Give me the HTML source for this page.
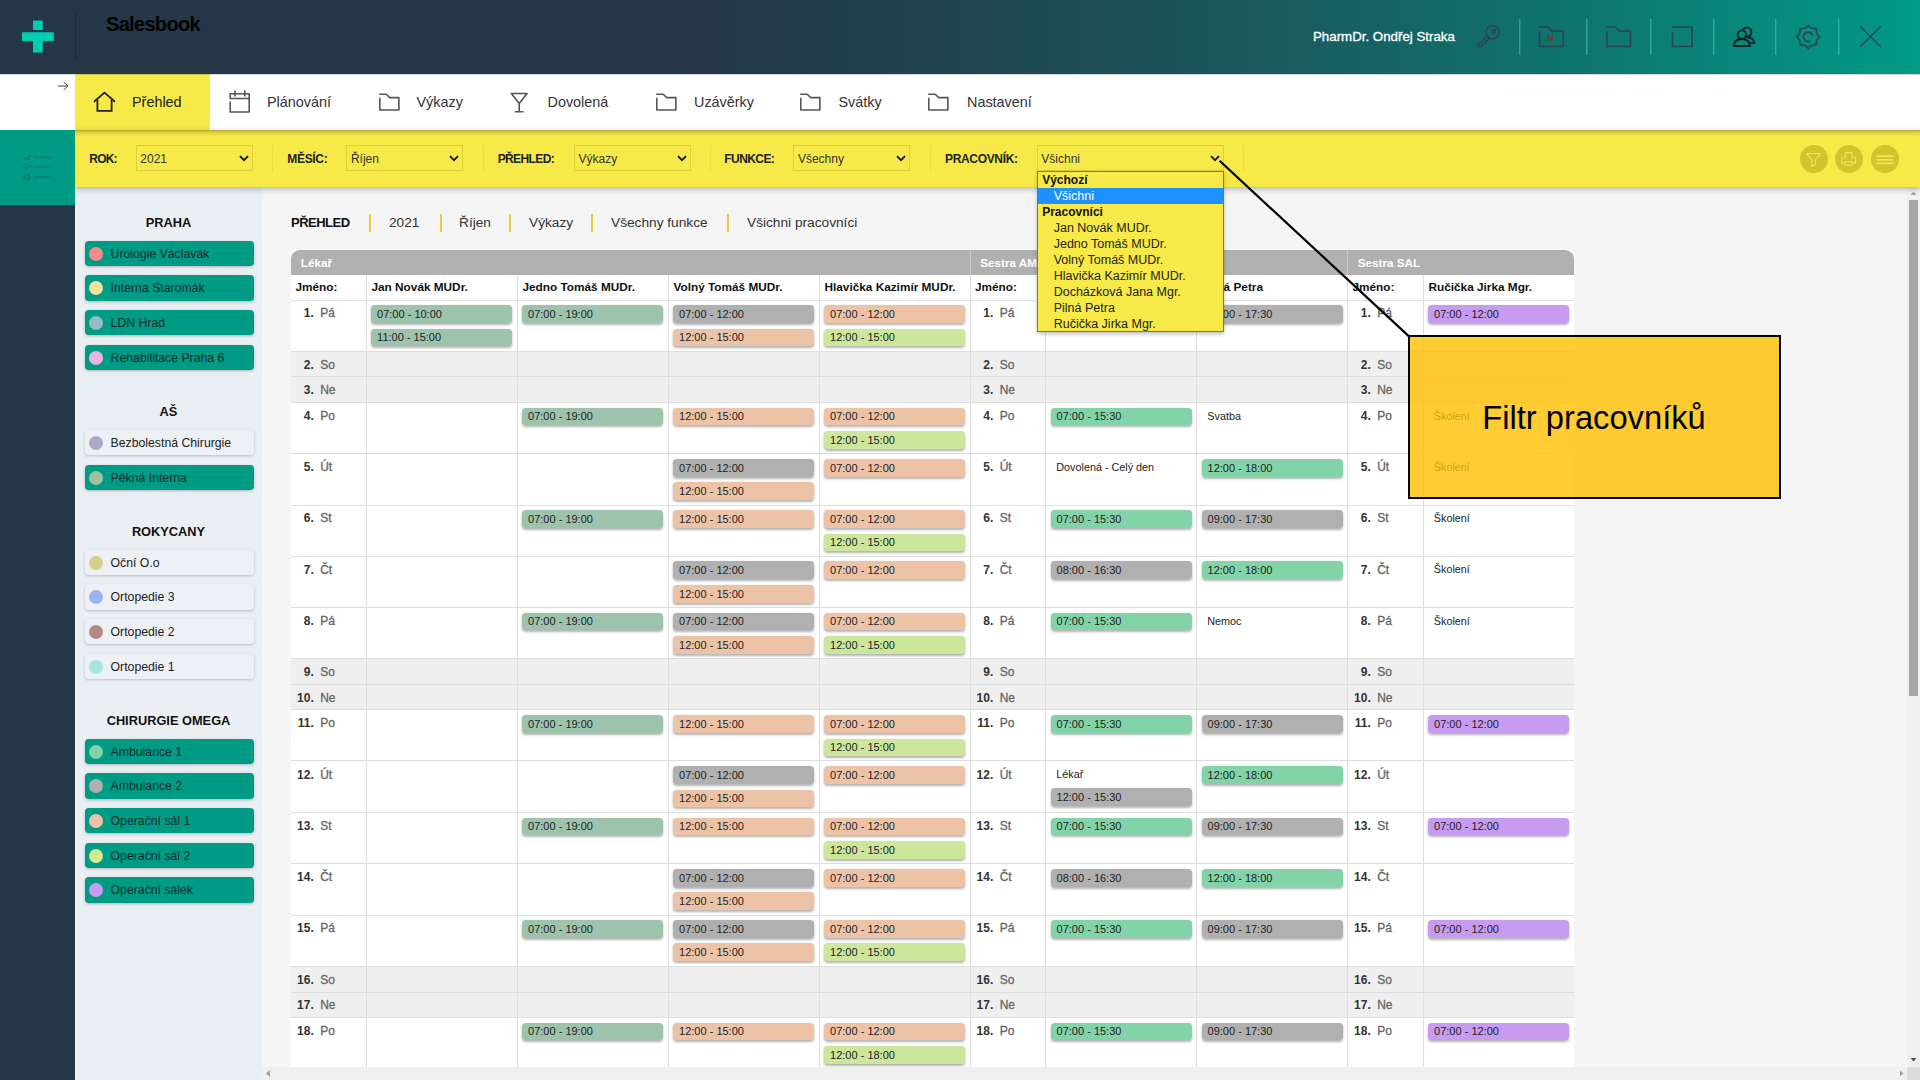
<!DOCTYPE html>
<html lang="cs">
<head>
<meta charset="utf-8">
<title>Salesbook</title>
<style>
*{box-sizing:border-box;margin:0;padding:0}
html,body{width:1920px;height:1080px;overflow:hidden;background:#f5f5f5;font-family:"Liberation Sans",sans-serif;color:#222}
.abs{position:absolute}
#top{position:absolute;left:0;top:0;width:1920px;height:74px;background:linear-gradient(90deg,#253746 0%,#253746 35%,#233c49 41.7%,#1f4751 52.1%,#195c60 67.7%,#0e7770 83.3%,#029885 99%,#009d88 100%)}
#top .vsep{position:absolute;top:13px;height:47px;width:1px;left:75px;background:#1c2b38}
#brand{position:absolute;left:106px;top:13px;font-size:20px;font-weight:bold;color:#000;line-height:22px;letter-spacing:-0.68px}
#user{position:absolute;left:1313px;top:28px;font-size:13.3px;color:#fff;white-space:nowrap;line-height:17px;-webkit-text-stroke:0.3px #fff}
.tsep{position:absolute;top:19px;height:36px;width:1px;background:rgba(80,210,190,.5);box-shadow:1px 0 0 rgba(80,210,190,.22)}
.tico{position:absolute;top:24px;width:26px;height:26px}
#nav{position:absolute;left:0;top:74px;width:1920px;height:56px;background:#fff}
#nav:after{content:"";position:absolute;left:0;top:0;width:100%;height:1px;background:rgba(37,55,70,.2)}
#nav .tab{position:absolute;top:0;height:56px;font-size:14.4px;color:#333;line-height:56px;white-space:nowrap}
#nav .active{left:75px;width:135px;background:#f7e948}
#filter{position:absolute;left:75px;top:130px;width:1845px;height:57px;background:#f7e948;box-shadow:0 2px 6px rgba(0,0,0,.28)}
#filter:before{content:"";position:absolute;left:0;top:0;width:100%;height:7px;background:linear-gradient(rgba(0,0,0,.27),rgba(0,0,0,.08) 45%,rgba(0,0,0,0))}
#filter .lbl{position:absolute;top:22px;font-size:12px;font-weight:bold;color:#222;white-space:nowrap;letter-spacing:-0.33px;line-height:14px}
#filter .sel{position:absolute;top:15px;height:26px;border:1px solid #dfd03e;border-radius:0;font-size:12px;color:#333;line-height:26.6px;padding-left:3.6px}
#filter .sel svg{position:absolute;right:3.2px;top:8.6px}
#filter .fsep{position:absolute;top:15px;width:1px;height:27px;background:#ecdd42}
.circ{position:absolute;top:14.7px;width:28.4px;height:28.4px;border-radius:50%;background:#d1c42f}
#sideteal{z-index:5;position:absolute;left:0;top:130px;width:75px;height:75px;background:#009b85}
#sidedark{z-index:5;position:absolute;left:0;top:205px;width:75px;height:875px;background:#253746}
#panel{position:absolute;left:75px;top:187px;width:187.3px;height:893px;background:#eaeff3}
#panel h3{position:absolute;left:0;width:187px;text-align:center;font-size:12.8px;margin-top:1px;font-weight:bold;color:#111}
.pbtn{position:absolute;left:9.6px;width:169px;height:25.4px;border-radius:4px;font-size:12.25px;line-height:26.4px;padding-left:26px;color:#0d2b2a;white-space:nowrap;box-shadow:0 1px 3px rgba(0,0,0,.25)}
.pbtn.on{background:#009b85}
.pbtn.off{background:#edf0f4;color:#222;box-shadow:0 1px 3px rgba(0,0,0,.2)}
.pbtn i{position:absolute;left:4.5px;top:6px;width:14px;height:14px;border-radius:50%}
#crumbs{position:absolute;left:291px;top:214.7px;font-size:13.7px;color:#333;white-space:nowrap}
#crumbs span{position:absolute;top:0}
#crumbs b{color:#111;font-size:13px;letter-spacing:-0.5px}
#crumbs .bar{position:absolute;top:-1px;margin-left:.7px;width:2px;height:18px;background:#e3cf3a}
table{position:absolute;border-collapse:separate;border-spacing:0;table-layout:fixed}

#grid{position:absolute;left:0;top:0}
.grp{position:absolute;top:250px;font-size:12px;height:830px}
.gh{height:25px;background:#b0b0b0;color:#fff;font-weight:bold;font-size:11.7px;line-height:26px;padding-left:9.5px;border-right:1px solid #c8c8c8}
.grp.first .gh{border-top-left-radius:9px}
.grp.last .gh{border-top-right-radius:9px;border-right:none}
.row{display:flex;background:#fff;border-bottom:1px solid #dedede}
.row.nm{height:26px;font-weight:bold;color:#111;line-height:25px;font-size:11.8px}
.row.wd,.row.we{position:absolute;left:0;width:100%}
.row.we{background:#efefef}
.c0{width:75.5px;flex:none;border-right:1px solid #dedede;padding-left:4.2px;white-space:nowrap}
.cc{position:relative;width:151px;flex:none;border-right:1px solid #dedede;white-space:nowrap}
.grp.last .cc:last-child{border-right:none;width:150.4px}
.row.nm .cc{padding:0 0 0 4.7px}
.row.wd .c0,.row.we .c0{padding:0;line-height:14px;color:#666}
.c0 b{display:inline-block;width:22.5px;text-align:right;color:#333;font-weight:bold}
.c0 span{margin-left:6.4px;-webkit-text-stroke:0.3px #666}
.chip{position:absolute;left:4.7px;width:141px;border-radius:4px;font-size:11px;padding-left:5.6px;color:#222;box-shadow:0 1.5px 2.5px rgba(0,0,0,.3)}
.txt{position:absolute;left:4.7px;height:18px;font-size:10.8px;line-height:17.6px;padding-left:5.3px;color:#222}
.sage{background:#9dc3ac}.gray{background:#b0b0b0}.salmon{background:#edc3a8}.lime{background:#cce69c}.green{background:#82d4a8}.purple{background:#c79bf0}
#vsb{position:absolute;left:1907px;top:187px;width:13px;height:880px;background:#f0f0f0}
#vsb .thumb{position:absolute;left:2px;top:13px;width:9px;height:496px;background:#a8a8a8}
#hsb{position:absolute;left:262px;top:1067px;width:1645px;height:13px;background:#f0f0f0}
#corner{position:absolute;left:1907px;top:1067px;width:13px;height:13px;background:#dcdcdc}
#dd{position:absolute;left:1036.7px;top:170.6px;width:187px;height:161px;background:#f7e948;border:1px solid #767676;font-size:12.5px;color:#222;box-shadow:0 2px 4px rgba(0,0,0,.25);line-height:16px}
#dd .og{font-weight:bold;padding-left:4.5px;height:16px;color:#111;font-size:12px}
#dd .op{padding-left:16px;height:16px}
#dd .sel2{background:#1e90ff;color:#fff}
#callout{position:absolute;left:1408px;top:335px;width:373px;height:164px;border:2px solid #000;background:rgba(255,192,0,.8);}
#callout span{position:absolute;left:72.3px;top:63px;font-size:32.7px;color:#000;white-space:nowrap;line-height:36px}
</style>
</head>
<body>
<div id="top">
<svg class="abs" style="left:21px;top:20px" width="34" height="34" viewBox="0 0 34 34"><path d="M12 .6h9.75V10H12zM.9 12.25h31.85v9H21.75V32.5H12V21.25H.9z" fill="#00cdb0"/></svg>
<div class="vsep"></div>
<div id="brand">Salesbook</div>
<div id="user">PharmDr. Ondřej Straka</div>

<svg class="abs" style="left:1475px;top:23px" width="27" height="27" viewBox="0 0 27 27" fill="none" stroke="#2b4655" stroke-width="1.7" stroke-linecap="round" stroke-linejoin="round"><circle cx="17.6" cy="9.3" r="6.6"/><circle cx="18.8" cy="8.2" r="1.6"/><path d="M12.3 13.2L3 21.3v2.4h2.9l1.6-1.5v-1.8h1.9l1.5-1.4v-1.7h1.8l2-1.9"/></svg>
<div class="tsep" style="left:1519px"></div>
<svg class="abs" style="left:1537px;top:24px" width="29" height="26" viewBox="0 0 29 26" fill="none" stroke="#2b4655" stroke-width="1.7" stroke-linejoin="round" stroke-linecap="round"><path d="M2.5 3h8.5l4 4.2h11.2v15.3H2.5V8"/><text x="10.6" y="17.4" font-family="Liberation Sans, sans-serif" font-size="8.5" font-weight="bold" fill="#6e3a30" stroke="none">N</text></svg>
<div class="tsep" style="left:1586px"></div>
<svg class="abs" style="left:1604px;top:24px" width="29" height="26" viewBox="0 0 29 26" fill="none" stroke="#2b4655" stroke-width="1.7" stroke-linejoin="round" stroke-linecap="round"><path d="M2.8 3h8.5l4 4.2h11.2v15.3H2.8V8"/></svg>
<div class="tsep" style="left:1649.5px"></div>
<svg class="abs" style="left:1670px;top:24px" width="25" height="26" viewBox="0 0 25 26" fill="none" stroke="#2b4655" stroke-width="1.7" stroke-linejoin="round" stroke-linecap="round"><path d="M2.5 3h19.5M2.5 8.5v14h19.5V3.2"/></svg>
<div class="tsep" style="left:1712.5px"></div>
<svg class="abs" style="left:1731px;top:24px" width="27" height="26" viewBox="0 0 27 26" fill="none" stroke="#0b1f20" stroke-width="1.8" stroke-linejoin="round" stroke-linecap="round"><circle cx="10.9" cy="10.6" r="4.3"/><path d="M12.6 5.2a4.5 4.5 0 1 1 3.6 7.4"/><path d="M3 22.2c0-4.6 3.1-7.2 7.9-7.2s7.9 2.6 7.9 7.2z"/><path d="M17.5 13.6c3.6 .5 5.6 2.6 5.9 5.6h-3.6"/></svg>
<div class="tsep" style="left:1775px"></div>
<svg class="abs" style="left:1795px;top:23px" width="27" height="28" viewBox="0 0 27 28" fill="none" stroke="#2b4655" stroke-width="1.7" stroke-linejoin="round" stroke-linecap="round"><path d="M13.2 2.2L13.5 2.6L13.8 2.9L14.0 3.2L14.3 3.4L14.5 3.7L14.8 3.9L15.0 4.1L15.2 4.3L15.4 4.4L15.7 4.6L15.9 4.7L16.1 4.9L16.3 5.0L16.5 5.1L16.8 5.2L17.0 5.3L17.2 5.4L17.5 5.4L17.7 5.5L18.0 5.5L18.2 5.6L18.5 5.6L18.8 5.6L19.1 5.7L19.4 5.7L19.8 5.7L20.1 5.7L20.5 5.7L20.9 5.7L21.4 5.6L21.3 6.1L21.3 6.5L21.3 6.9L21.3 7.2L21.3 7.6L21.3 7.9L21.4 8.2L21.4 8.5L21.4 8.8L21.5 9.0L21.5 9.3L21.6 9.5L21.6 9.8L21.7 10.0L21.8 10.2L21.9 10.5L22.0 10.7L22.1 10.9L22.3 11.1L22.4 11.3L22.6 11.6L22.7 11.8L22.9 12.0L23.1 12.2L23.3 12.5L23.6 12.7L23.8 13.0L24.1 13.2L24.4 13.5L24.8 13.8L24.4 14.1L24.1 14.4L23.8 14.6L23.6 14.9L23.3 15.1L23.1 15.4L22.9 15.6L22.7 15.8L22.6 16.0L22.4 16.3L22.3 16.5L22.1 16.7L22.0 16.9L21.9 17.1L21.8 17.4L21.7 17.6L21.6 17.8L21.6 18.1L21.5 18.3L21.5 18.6L21.4 18.8L21.4 19.1L21.4 19.4L21.3 19.7L21.3 20.0L21.3 20.4L21.3 20.7L21.3 21.1L21.3 21.5L21.4 22.0L20.9 21.9L20.5 21.9L20.1 21.9L19.8 21.9L19.4 21.9L19.1 21.9L18.8 22.0L18.5 22.0L18.2 22.0L18.0 22.1L17.7 22.1L17.5 22.2L17.2 22.2L17.0 22.3L16.8 22.4L16.5 22.5L16.3 22.6L16.1 22.7L15.9 22.9L15.7 23.0L15.4 23.2L15.2 23.3L15.0 23.5L14.8 23.7L14.5 23.9L14.3 24.2L14.0 24.4L13.8 24.7L13.5 25.0L13.2 25.4L12.9 25.0L12.6 24.7L12.4 24.4L12.1 24.2L11.9 23.9L11.6 23.7L11.4 23.5L11.2 23.3L11.0 23.2L10.7 23.0L10.5 22.9L10.3 22.7L10.1 22.6L9.9 22.5L9.6 22.4L9.4 22.3L9.2 22.2L8.9 22.2L8.7 22.1L8.4 22.1L8.2 22.0L7.9 22.0L7.6 22.0L7.3 21.9L7.0 21.9L6.6 21.9L6.3 21.9L5.9 21.9L5.5 21.9L5.0 22.0L5.1 21.5L5.1 21.1L5.1 20.7L5.1 20.4L5.1 20.0L5.1 19.7L5.0 19.4L5.0 19.1L5.0 18.8L4.9 18.6L4.9 18.3L4.8 18.1L4.8 17.8L4.7 17.6L4.6 17.4L4.5 17.1L4.4 16.9L4.3 16.7L4.1 16.5L4.0 16.3L3.8 16.0L3.7 15.8L3.5 15.6L3.3 15.4L3.1 15.1L2.8 14.9L2.6 14.6L2.3 14.4L2.0 14.1L1.6 13.8L2.0 13.5L2.3 13.2L2.6 13.0L2.8 12.7L3.1 12.5L3.3 12.2L3.5 12.0L3.7 11.8L3.8 11.6L4.0 11.3L4.1 11.1L4.3 10.9L4.4 10.7L4.5 10.5L4.6 10.2L4.7 10.0L4.8 9.8L4.8 9.5L4.9 9.3L4.9 9.0L5.0 8.8L5.0 8.5L5.0 8.2L5.1 7.9L5.1 7.6L5.1 7.2L5.1 6.9L5.1 6.5L5.1 6.1L5.0 5.6L5.5 5.7L5.9 5.7L6.3 5.7L6.6 5.7L7.0 5.7L7.3 5.7L7.6 5.6L7.9 5.6L8.2 5.6L8.4 5.5L8.7 5.5L8.9 5.4L9.2 5.4L9.4 5.3L9.6 5.2L9.9 5.1L10.1 5.0L10.3 4.9L10.5 4.7L10.7 4.6L11.0 4.4L11.2 4.3L11.4 4.1L11.6 3.9L11.9 3.7L12.1 3.4L12.4 3.2L12.6 2.9L12.9 2.6L13.2 2.2Z"/><path d="M17.6 12.2a4.7 4.7 0 1 0-2.6 5.9"/></svg>
<div class="tsep" style="left:1838px"></div>
<svg class="abs" style="left:1858px;top:24px" width="25" height="25" viewBox="0 0 25 25" fill="none" stroke="#2b4655" stroke-width="1.5" stroke-linecap="round"><path d="M2.6 2.8l19.6 19.4M22.2 2.8L2.6 22.2"/></svg>

</div>
<div id="nav">

<svg class="abs" style="left:57px;top:6px" width="12" height="12" viewBox="0 0 12 12" fill="none" stroke="#444" stroke-width="1" stroke-linecap="round" stroke-linejoin="round"><path d="M1.5 6h9M7 2.2L10.7 6 7 9.8"/></svg>

<div class="tab active"></div>

<svg class="abs" style="left:92px;top:16px" width="25" height="24" viewBox="0 0 25 24" fill="none" stroke="#222" stroke-width="1.8" stroke-linejoin="miter" stroke-linecap="round"><path d="M2.6 11.3L12.5 2.6l9.9 8.7"/><path d="M5.4 10.6v10.2h14.2V10.6"/></svg>
<div class="tab" style="left:132px;color:#222">Přehled</div>
<svg class="abs" style="left:227px;top:15px" width="25" height="26" viewBox="0 0 25 26" fill="none" stroke="#555" stroke-width="1.6" stroke-linejoin="round" stroke-linecap="round"><path d="M3.2 9.5h19M3.2 13v10h19V4.8h-19v4.6"/><path d="M8 2v5M17.8 2v5"/></svg>
<div class="tab" style="left:267px">Plánování</div>
<svg class="abs" style="left:376.7px;top:18px" width="26" height="22" viewBox="0 0 26 22" fill="none" stroke="#555" stroke-width="1.6" stroke-linejoin="round" stroke-linecap="round"><path d="M2.8 2.3h6.5l3.3 3.3h9.3v12.4H2.8V6.4"/></svg>
<div class="tab" style="left:416.5px">Výkazy</div>
<svg class="abs" style="left:508px;top:17px" width="22" height="24" viewBox="0 0 22 24" fill="none" stroke="#555" stroke-width="1.6" stroke-linejoin="round" stroke-linecap="round"><path d="M3.2 2.5h16M3.6 2.8l7.6 9.6 7.6-9.6M11.2 12.4v8.2M7.4 20.8h7.6"/></svg>
<div class="tab" style="left:547.5px">Dovolená</div>
<svg class="abs" style="left:653.9px;top:18px" width="26" height="22" viewBox="0 0 26 22" fill="none" stroke="#555" stroke-width="1.6" stroke-linejoin="round" stroke-linecap="round"><path d="M2.8 2.3h6.5l3.3 3.3h9.3v12.4H2.8V6.4"/></svg>
<div class="tab" style="left:694px">Uzávěrky</div>
<svg class="abs" style="left:798px;top:18px" width="26" height="22" viewBox="0 0 26 22" fill="none" stroke="#555" stroke-width="1.6" stroke-linejoin="round" stroke-linecap="round"><path d="M2.8 2.3h6.5l3.3 3.3h9.3v12.4H2.8V6.4"/></svg>
<div class="tab" style="left:838.5px">Svátky</div>
<svg class="abs" style="left:926.3px;top:18px" width="26" height="22" viewBox="0 0 26 22" fill="none" stroke="#555" stroke-width="1.6" stroke-linejoin="round" stroke-linecap="round"><path d="M2.8 2.3h6.5l3.3 3.3h9.3v12.4H2.8V6.4"/></svg>
<div class="tab" style="left:967px">Nastavení</div>

</div>
<div id="sideteal"><svg class="abs" style="left:20px;top:20px" width="36" height="34" viewBox="0 0 36 34" fill="none" stroke="#007d6e" stroke-width="1.7" stroke-linecap="round" stroke-linejoin="round"><path d="M4 7l2.3 2.3L10.3 5.3M4 16.8l2.3 2.3 4-4"/><circle cx="6.7" cy="27" r="2.4"/><path d="M15.3 7.2h16M15.3 17h16M15.3 27h16"/></svg></div>
<div id="sidedark"></div>
<div id="panel">
<h3 style="top:27px">PRAHA</h3>
<div class="pbtn on" style="top:53.5px"><i style="background:#f58a8a"></i>Urologie Václavák</div>
<div class="pbtn on" style="top:88.2px"><i style="background:#f0e29a"></i>Interna Staromák</div>
<div class="pbtn on" style="top:122.9px"><i style="background:#94bcc4"></i>LDN Hrad</div>
<div class="pbtn on" style="top:157.6px"><i style="background:#e8b4dc"></i>Rehabilitace Praha 6</div>
<h3 style="top:216px">AŠ</h3>
<div class="pbtn off" style="top:243.0px"><i style="background:#b0a8c8"></i>Bezbolestná Chirurgie</div>
<div class="pbtn on" style="top:277.7px"><i style="background:#9dc3a4"></i>Pěkná Interna</div>
<h3 style="top:336px">ROKYCANY</h3>
<div class="pbtn off" style="top:362.5px"><i style="background:#d6cf8c"></i>Oční O.o</div>
<div class="pbtn off" style="top:397.2px"><i style="background:#9db4f0"></i>Ortopedie 3</div>
<div class="pbtn off" style="top:431.9px"><i style="background:#b58888"></i>Ortopedie 2</div>
<div class="pbtn off" style="top:466.6px"><i style="background:#a4e8dc"></i>Ortopedie 1</div>
<h3 style="top:525px">CHIRURGIE OMEGA</h3>
<div class="pbtn on" style="top:551.5px"><i style="background:#82d4a8"></i>Ambulance 1</div>
<div class="pbtn on" style="top:586.2px"><i style="background:#b0b0b0"></i>Ambulance 2</div>
<div class="pbtn on" style="top:620.9px"><i style="background:#edc3a8"></i>Operační sál 1</div>
<div class="pbtn on" style="top:655.6px"><i style="background:#d4e890"></i>Operační sál 2</div>
<div class="pbtn on" style="top:690.3px"><i style="background:#c79bf0"></i>Operační sálek</div>
</div>
<div id="crumbs">
<span style="left:0"><b>PŘEHLED</b></span><div class="bar" style="left:77px"></div>
<span style="left:98px">2021</span><div class="bar" style="left:148px"></div>
<span style="left:168px">Říjen</span><div class="bar" style="left:217px"></div>
<span style="left:238px">Výkazy</span><div class="bar" style="left:299px"></div>
<span style="left:320px">Všechny funkce</span><div class="bar" style="left:435px"></div>
<span style="left:456px">Všichni pracovníci</span>
</div>
<div id="grid">
<div class="grp first" style="left:291.3px;width:679.5px">
<div class="gh">Lékař</div>
<div class="row nm"><div class="c0">Jméno:</div><div class="cc">Jan Novák MUDr.</div><div class="cc">Jedno Tomáš MUDr.</div><div class="cc">Volný Tomáš MUDr.</div><div class="cc">Hlavička Kazimír MUDr.</div></div>
<div class="row wd" style="top:51px;height:51px"><div class="c0" style="padding-top:5px"><b>1.</b><span>Pá</span></div><div class="cc"><div class="chip sage" style="top:4px;height:18px;line-height:18px">07:00 - 10:00</div><div class="chip sage" style="top:28px;height:17px;line-height:17px">11:00 - 15:00</div></div><div class="cc"><div class="chip sage" style="top:4px;height:18px;line-height:18px">07:00 - 19:00</div></div><div class="cc"><div class="chip gray" style="top:4px;height:18px;line-height:18px">07:00 - 12:00</div><div class="chip salmon" style="top:28px;height:17px;line-height:17px">12:00 - 15:00</div></div><div class="cc"><div class="chip salmon" style="top:4px;height:18px;line-height:18px">07:00 - 12:00</div><div class="chip lime" style="top:28px;height:17px;line-height:17px">12:00 - 15:00</div></div></div>
<div class="row we" style="top:102px;height:25px"><div class="c0" style="padding-top:6px"><b>2.</b><span>So</span></div><div class="cc"></div><div class="cc"></div><div class="cc"></div><div class="cc"></div></div>
<div class="row we" style="top:127px;height:26px"><div class="c0" style="padding-top:6px"><b>3.</b><span>Ne</span></div><div class="cc"></div><div class="cc"></div><div class="cc"></div><div class="cc"></div></div>
<div class="row wd" style="top:153px;height:51px"><div class="c0" style="padding-top:6px"><b>4.</b><span>Po</span></div><div class="cc"></div><div class="cc"><div class="chip sage" style="top:5px;height:17px;line-height:17px">07:00 - 19:00</div></div><div class="cc"><div class="chip salmon" style="top:5px;height:17px;line-height:17px">12:00 - 15:00</div></div><div class="cc"><div class="chip salmon" style="top:5px;height:17px;line-height:17px">07:00 - 12:00</div><div class="chip lime" style="top:28px;height:18px;line-height:18px">12:00 - 15:00</div></div></div>
<div class="row wd" style="top:204px;height:52px"><div class="c0" style="padding-top:6px"><b>5.</b><span>Út</span></div><div class="cc"></div><div class="cc"></div><div class="cc"><div class="chip gray" style="top:5px;height:18px;line-height:18px">07:00 - 12:00</div><div class="chip salmon" style="top:28px;height:18px;line-height:18px">12:00 - 15:00</div></div><div class="cc"><div class="chip salmon" style="top:5px;height:18px;line-height:18px">07:00 - 12:00</div></div></div>
<div class="row wd" style="top:256px;height:51px"><div class="c0" style="padding-top:5px"><b>6.</b><span>St</span></div><div class="cc"></div><div class="cc"><div class="chip sage" style="top:4px;height:18px;line-height:18px">07:00 - 19:00</div></div><div class="cc"><div class="chip salmon" style="top:4px;height:18px;line-height:18px">12:00 - 15:00</div></div><div class="cc"><div class="chip salmon" style="top:4px;height:18px;line-height:18px">07:00 - 12:00</div><div class="chip lime" style="top:28px;height:17px;line-height:17px">12:00 - 15:00</div></div></div>
<div class="row wd" style="top:307px;height:51px"><div class="c0" style="padding-top:6px"><b>7.</b><span>Čt</span></div><div class="cc"></div><div class="cc"></div><div class="cc"><div class="chip gray" style="top:4px;height:18px;line-height:18px">07:00 - 12:00</div><div class="chip salmon" style="top:28px;height:18px;line-height:18px">12:00 - 15:00</div></div><div class="cc"><div class="chip salmon" style="top:4px;height:18px;line-height:18px">07:00 - 12:00</div></div></div>
<div class="row wd" style="top:358px;height:51px"><div class="c0" style="padding-top:6px"><b>8.</b><span>Pá</span></div><div class="cc"></div><div class="cc"><div class="chip sage" style="top:5px;height:17px;line-height:17px">07:00 - 19:00</div></div><div class="cc"><div class="chip gray" style="top:5px;height:17px;line-height:17px">07:00 - 12:00</div><div class="chip salmon" style="top:28px;height:18px;line-height:18px">12:00 - 15:00</div></div><div class="cc"><div class="chip salmon" style="top:5px;height:17px;line-height:17px">07:00 - 12:00</div><div class="chip lime" style="top:28px;height:18px;line-height:18px">12:00 - 15:00</div></div></div>
<div class="row we" style="top:409px;height:26px"><div class="c0" style="padding-top:6px"><b>9.</b><span>So</span></div><div class="cc"></div><div class="cc"></div><div class="cc"></div><div class="cc"></div></div>
<div class="row we" style="top:435px;height:25px"><div class="c0" style="padding-top:6px"><b>10.</b><span>Ne</span></div><div class="cc"></div><div class="cc"></div><div class="cc"></div><div class="cc"></div></div>
<div class="row wd" style="top:460px;height:51px"><div class="c0" style="padding-top:6px"><b>11.</b><span>Po</span></div><div class="cc"></div><div class="cc"><div class="chip sage" style="top:5px;height:18px;line-height:18px">07:00 - 19:00</div></div><div class="cc"><div class="chip salmon" style="top:5px;height:18px;line-height:18px">12:00 - 15:00</div></div><div class="cc"><div class="chip salmon" style="top:5px;height:18px;line-height:18px">07:00 - 12:00</div><div class="chip lime" style="top:29px;height:17px;line-height:17px">12:00 - 15:00</div></div></div>
<div class="row wd" style="top:511px;height:52px"><div class="c0" style="padding-top:7px"><b>12.</b><span>Út</span></div><div class="cc"></div><div class="cc"></div><div class="cc"><div class="chip gray" style="top:5px;height:18px;line-height:18px">07:00 - 12:00</div><div class="chip salmon" style="top:29px;height:17px;line-height:17px">12:00 - 15:00</div></div><div class="cc"><div class="chip salmon" style="top:5px;height:18px;line-height:18px">07:00 - 12:00</div></div></div>
<div class="row wd" style="top:563px;height:51px"><div class="c0" style="padding-top:6px"><b>13.</b><span>St</span></div><div class="cc"></div><div class="cc"><div class="chip sage" style="top:5px;height:17px;line-height:17px">07:00 - 19:00</div></div><div class="cc"><div class="chip salmon" style="top:5px;height:17px;line-height:17px">12:00 - 15:00</div></div><div class="cc"><div class="chip salmon" style="top:5px;height:17px;line-height:17px">07:00 - 12:00</div><div class="chip lime" style="top:28px;height:18px;line-height:18px">12:00 - 15:00</div></div></div>
<div class="row wd" style="top:614px;height:52px"><div class="c0" style="padding-top:6px"><b>14.</b><span>Čt</span></div><div class="cc"></div><div class="cc"></div><div class="cc"><div class="chip gray" style="top:5px;height:18px;line-height:18px">07:00 - 12:00</div><div class="chip salmon" style="top:28px;height:18px;line-height:18px">12:00 - 15:00</div></div><div class="cc"><div class="chip salmon" style="top:5px;height:18px;line-height:18px">07:00 - 12:00</div></div></div>
<div class="row wd" style="top:666px;height:51px"><div class="c0" style="padding-top:5px"><b>15.</b><span>Pá</span></div><div class="cc"></div><div class="cc"><div class="chip sage" style="top:4px;height:18px;line-height:18px">07:00 - 19:00</div></div><div class="cc"><div class="chip gray" style="top:4px;height:18px;line-height:18px">07:00 - 12:00</div><div class="chip salmon" style="top:27px;height:18px;line-height:18px">12:00 - 15:00</div></div><div class="cc"><div class="chip salmon" style="top:4px;height:18px;line-height:18px">07:00 - 12:00</div><div class="chip lime" style="top:27px;height:18px;line-height:18px">12:00 - 15:00</div></div></div>
<div class="row we" style="top:717px;height:26px"><div class="c0" style="padding-top:6px"><b>16.</b><span>So</span></div><div class="cc"></div><div class="cc"></div><div class="cc"></div><div class="cc"></div></div>
<div class="row we" style="top:743px;height:25px"><div class="c0" style="padding-top:5px"><b>17.</b><span>Ne</span></div><div class="cc"></div><div class="cc"></div><div class="cc"></div><div class="cc"></div></div>
<div class="row wd" style="top:768px;height:52px"><div class="c0" style="padding-top:6px"><b>18.</b><span>Po</span></div><div class="cc"></div><div class="cc"><div class="chip sage" style="top:5px;height:17px;line-height:17px">07:00 - 19:00</div></div><div class="cc"><div class="chip salmon" style="top:5px;height:17px;line-height:17px">12:00 - 15:00</div></div><div class="cc"><div class="chip salmon" style="top:5px;height:17px;line-height:17px">07:00 - 12:00</div><div class="chip lime" style="top:28px;height:18px;line-height:18px">12:00 - 18:00</div></div></div>
</div>
<div class="grp " style="left:970.8px;width:377.5px">
<div class="gh">Sestra AMB</div>
<div class="row nm"><div class="c0">Jméno:</div><div class="cc">Docházková Jana Mgr.</div><div class="cc">Pilná Petra</div></div>
<div class="row wd" style="top:51px;height:51px"><div class="c0" style="padding-top:5px"><b>1.</b><span>Pá</span></div><div class="cc"><div class="chip green" style="top:4px;height:18px;line-height:18px">07:00 - 15:30</div></div><div class="cc"><div class="chip gray" style="top:4px;height:18px;line-height:18px">09:00 - 17:30</div></div></div>
<div class="row we" style="top:102px;height:25px"><div class="c0" style="padding-top:6px"><b>2.</b><span>So</span></div><div class="cc"></div><div class="cc"></div></div>
<div class="row we" style="top:127px;height:26px"><div class="c0" style="padding-top:6px"><b>3.</b><span>Ne</span></div><div class="cc"></div><div class="cc"></div></div>
<div class="row wd" style="top:153px;height:51px"><div class="c0" style="padding-top:6px"><b>4.</b><span>Po</span></div><div class="cc"><div class="chip green" style="top:5px;height:17px;line-height:17px">07:00 - 15:30</div></div><div class="cc"><div class="txt" style="top:5px">Svatba</div></div></div>
<div class="row wd" style="top:204px;height:52px"><div class="c0" style="padding-top:6px"><b>5.</b><span>Út</span></div><div class="cc"><div class="txt" style="top:5px">Dovolená - Celý den</div></div><div class="cc"><div class="chip green" style="top:5px;height:18px;line-height:18px">12:00 - 18:00</div></div></div>
<div class="row wd" style="top:256px;height:51px"><div class="c0" style="padding-top:5px"><b>6.</b><span>St</span></div><div class="cc"><div class="chip green" style="top:4px;height:18px;line-height:18px">07:00 - 15:30</div></div><div class="cc"><div class="chip gray" style="top:4px;height:18px;line-height:18px">09:00 - 17:30</div></div></div>
<div class="row wd" style="top:307px;height:51px"><div class="c0" style="padding-top:6px"><b>7.</b><span>Čt</span></div><div class="cc"><div class="chip gray" style="top:4px;height:18px;line-height:18px">08:00 - 16:30</div></div><div class="cc"><div class="chip green" style="top:4px;height:18px;line-height:18px">12:00 - 18:00</div></div></div>
<div class="row wd" style="top:358px;height:51px"><div class="c0" style="padding-top:6px"><b>8.</b><span>Pá</span></div><div class="cc"><div class="chip green" style="top:5px;height:17px;line-height:17px">07:00 - 15:30</div></div><div class="cc"><div class="txt" style="top:5px">Nemoc</div></div></div>
<div class="row we" style="top:409px;height:26px"><div class="c0" style="padding-top:6px"><b>9.</b><span>So</span></div><div class="cc"></div><div class="cc"></div></div>
<div class="row we" style="top:435px;height:25px"><div class="c0" style="padding-top:6px"><b>10.</b><span>Ne</span></div><div class="cc"></div><div class="cc"></div></div>
<div class="row wd" style="top:460px;height:51px"><div class="c0" style="padding-top:6px"><b>11.</b><span>Po</span></div><div class="cc"><div class="chip green" style="top:5px;height:18px;line-height:18px">07:00 - 15:30</div></div><div class="cc"><div class="chip gray" style="top:5px;height:18px;line-height:18px">09:00 - 17:30</div></div></div>
<div class="row wd" style="top:511px;height:52px"><div class="c0" style="padding-top:7px"><b>12.</b><span>Út</span></div><div class="cc"><div class="txt" style="top:5px">Lékař</div><div class="chip gray" style="top:27px;height:18px;line-height:18px">12:00 - 15:30</div></div><div class="cc"><div class="chip green" style="top:5px;height:18px;line-height:18px">12:00 - 18:00</div></div></div>
<div class="row wd" style="top:563px;height:51px"><div class="c0" style="padding-top:6px"><b>13.</b><span>St</span></div><div class="cc"><div class="chip green" style="top:5px;height:17px;line-height:17px">07:00 - 15:30</div></div><div class="cc"><div class="chip gray" style="top:5px;height:17px;line-height:17px">09:00 - 17:30</div></div></div>
<div class="row wd" style="top:614px;height:52px"><div class="c0" style="padding-top:6px"><b>14.</b><span>Čt</span></div><div class="cc"><div class="chip gray" style="top:5px;height:18px;line-height:18px">08:00 - 16:30</div></div><div class="cc"><div class="chip green" style="top:5px;height:18px;line-height:18px">12:00 - 18:00</div></div></div>
<div class="row wd" style="top:666px;height:51px"><div class="c0" style="padding-top:5px"><b>15.</b><span>Pá</span></div><div class="cc"><div class="chip green" style="top:4px;height:18px;line-height:18px">07:00 - 15:30</div></div><div class="cc"><div class="chip gray" style="top:4px;height:18px;line-height:18px">09:00 - 17:30</div></div></div>
<div class="row we" style="top:717px;height:26px"><div class="c0" style="padding-top:6px"><b>16.</b><span>So</span></div><div class="cc"></div><div class="cc"></div></div>
<div class="row we" style="top:743px;height:25px"><div class="c0" style="padding-top:5px"><b>17.</b><span>Ne</span></div><div class="cc"></div><div class="cc"></div></div>
<div class="row wd" style="top:768px;height:52px"><div class="c0" style="padding-top:6px"><b>18.</b><span>Po</span></div><div class="cc"><div class="chip green" style="top:5px;height:17px;line-height:17px">07:00 - 15:30</div></div><div class="cc"><div class="chip gray" style="top:5px;height:17px;line-height:17px">09:00 - 17:30</div></div></div>
</div>
<div class="grp last" style="left:1348.3px;width:225.9px">
<div class="gh">Sestra SAL</div>
<div class="row nm"><div class="c0">Jméno:</div><div class="cc">Ručička Jirka Mgr.</div></div>
<div class="row wd" style="top:51px;height:51px"><div class="c0" style="padding-top:5px"><b>1.</b><span>Pá</span></div><div class="cc"><div class="chip purple" style="top:4px;height:18px;line-height:18px">07:00 - 12:00</div></div></div>
<div class="row we" style="top:102px;height:25px"><div class="c0" style="padding-top:6px"><b>2.</b><span>So</span></div><div class="cc"></div></div>
<div class="row we" style="top:127px;height:26px"><div class="c0" style="padding-top:6px"><b>3.</b><span>Ne</span></div><div class="cc"></div></div>
<div class="row wd" style="top:153px;height:51px"><div class="c0" style="padding-top:6px"><b>4.</b><span>Po</span></div><div class="cc"><div class="txt" style="top:5px">Školení</div></div></div>
<div class="row wd" style="top:204px;height:52px"><div class="c0" style="padding-top:6px"><b>5.</b><span>Út</span></div><div class="cc"><div class="txt" style="top:5px">Školení</div></div></div>
<div class="row wd" style="top:256px;height:51px"><div class="c0" style="padding-top:5px"><b>6.</b><span>St</span></div><div class="cc"><div class="txt" style="top:4px">Školení</div></div></div>
<div class="row wd" style="top:307px;height:51px"><div class="c0" style="padding-top:6px"><b>7.</b><span>Čt</span></div><div class="cc"><div class="txt" style="top:4px">Školení</div></div></div>
<div class="row wd" style="top:358px;height:51px"><div class="c0" style="padding-top:6px"><b>8.</b><span>Pá</span></div><div class="cc"><div class="txt" style="top:5px">Školení</div></div></div>
<div class="row we" style="top:409px;height:26px"><div class="c0" style="padding-top:6px"><b>9.</b><span>So</span></div><div class="cc"></div></div>
<div class="row we" style="top:435px;height:25px"><div class="c0" style="padding-top:6px"><b>10.</b><span>Ne</span></div><div class="cc"></div></div>
<div class="row wd" style="top:460px;height:51px"><div class="c0" style="padding-top:6px"><b>11.</b><span>Po</span></div><div class="cc"><div class="chip purple" style="top:5px;height:18px;line-height:18px">07:00 - 12:00</div></div></div>
<div class="row wd" style="top:511px;height:52px"><div class="c0" style="padding-top:7px"><b>12.</b><span>Út</span></div><div class="cc"></div></div>
<div class="row wd" style="top:563px;height:51px"><div class="c0" style="padding-top:6px"><b>13.</b><span>St</span></div><div class="cc"><div class="chip purple" style="top:5px;height:17px;line-height:17px">07:00 - 12:00</div></div></div>
<div class="row wd" style="top:614px;height:52px"><div class="c0" style="padding-top:6px"><b>14.</b><span>Čt</span></div><div class="cc"></div></div>
<div class="row wd" style="top:666px;height:51px"><div class="c0" style="padding-top:5px"><b>15.</b><span>Pá</span></div><div class="cc"><div class="chip purple" style="top:4px;height:18px;line-height:18px">07:00 - 12:00</div></div></div>
<div class="row we" style="top:717px;height:26px"><div class="c0" style="padding-top:6px"><b>16.</b><span>So</span></div><div class="cc"></div></div>
<div class="row we" style="top:743px;height:25px"><div class="c0" style="padding-top:5px"><b>17.</b><span>Ne</span></div><div class="cc"></div></div>
<div class="row wd" style="top:768px;height:52px"><div class="c0" style="padding-top:6px"><b>18.</b><span>Po</span></div><div class="cc"><div class="chip purple" style="top:5px;height:17px;line-height:17px">07:00 - 12:00</div></div></div>
</div>
</div>
<div id="vsb"><div class="thumb"></div>
<svg class="abs" style="left:3px;top:4px" width="7" height="4"><path d="M0.6 4L3.5 0.7 6.4 4z" fill="#a3a3a3"/></svg>
<svg class="abs" style="left:3px;top:871px" width="7" height="4"><path d="M0.5 0L3.5 3.6 6.5 0z" fill="#505050"/></svg></div>
<div id="hsb">
<svg class="abs" style="left:4px;top:3px" width="4" height="7"><path d="M4 0L0 3.5 4 7z" fill="#a3a3a3"/></svg>
<svg class="abs" style="left:1637.5px;top:3px" width="4" height="7"><path d="M0 0.5L3.6 3.5 0 6.5z" fill="#a3a3a3"/></svg></div>
<div id="corner"></div>
<div id="filter">
<div class="lbl" style="left:14.3px;letter-spacing:-0.83px">ROK:</div><div class="sel" style="left:60.7px;width:117px">2021<svg width="10" height="7" viewBox="0 0 10 7"><path d="M1 1.2l4 4 4-4" fill="none" stroke="#111" stroke-width="1.8"/></svg></div>
<div class="lbl" style="left:212.3px">MĚSÍC:</div><div class="sel" style="left:271.3px;width:117px">Říjen<svg width="10" height="7" viewBox="0 0 10 7"><path d="M1 1.2l4 4 4-4" fill="none" stroke="#111" stroke-width="1.8"/></svg></div>
<div class="lbl" style="left:422.7px;letter-spacing:-0.62px">PŘEHLED:</div><div class="sel" style="left:499.0px;width:117px">Výkazy<svg width="10" height="7" viewBox="0 0 10 7"><path d="M1 1.2l4 4 4-4" fill="none" stroke="#111" stroke-width="1.8"/></svg></div>
<div class="lbl" style="left:649.3px;letter-spacing:-0.57px">FUNKCE:</div><div class="sel" style="left:718.3px;width:117px">Všechny<svg width="10" height="7" viewBox="0 0 10 7"><path d="M1 1.2l4 4 4-4" fill="none" stroke="#111" stroke-width="1.8"/></svg></div>
<div class="lbl" style="left:870.0px">PRACOVNÍK:</div><div class="sel" style="left:961.7px;width:187px">Všichni<svg width="10" height="7" viewBox="0 0 10 7"><path d="M1 1.2l4 4 4-4" fill="none" stroke="#111" stroke-width="1.8"/></svg></div>
<div class="fsep" style="left:197.2px"></div>
<div class="fsep" style="left:408.2px"></div>
<div class="fsep" style="left:635.1px"></div>
<div class="fsep" style="left:854.8px"></div>
<div class="fsep" style="left:1168.2px"></div>

<div class="circ" style="left:1724.5px"><svg class="abs" style="left:5.7px;top:7.3px" width="17" height="17" viewBox="0 0 17 17" fill="none" stroke="#f3e548" stroke-width="1.2" stroke-linejoin="round"><path d="M1.6 1.5h13.8L10.2 8v4.6L6.9 14.6V8z"/></svg></div>
<div class="circ" style="left:1759.5px"><svg class="abs" style="left:5.7px;top:6.4px" width="17" height="17" viewBox="0 0 17 17" fill="none" stroke="#f3e548" stroke-width="1.2" stroke-linejoin="round"><path d="M5.3 7.6V1.7h6.4v5.9M5.3 6H2.6c-.6 0-1 .4-1 1v5.2h2.6M11.7 6h2.7c.6 0 1 .4 1 1v5.2h-2.6"/><rect x="4.2" y="10.6" width="8.6" height="3.6" rx="1.6"/></svg></div>
<div class="circ" style="left:1795.6px"><svg class="abs" style="left:5.2px;top:7.6px" width="18" height="16" viewBox="0 0 18 16" fill="none" stroke="#f3e548" stroke-width="1.8"><path d="M0.5 4.2h17M0.5 7.8h17M0.5 11.4h17"/></svg></div>

</div>
<div id="dd">
<div class="og">Výchozí</div>
<div class="op sel2">Všichni</div>
<div class="og">Pracovníci</div>
<div class="op">Jan Novák MUDr.</div>
<div class="op">Jedno Tomáš MUDr.</div>
<div class="op">Volný Tomáš MUDr.</div>
<div class="op">Hlavička Kazimír MUDr.</div>
<div class="op">Docházková Jana Mgr.</div>
<div class="op">Pilná Petra</div>
<div class="op">Ručička Jirka Mgr.</div>
</div>
<svg class="abs" style="left:1200px;top:140px" width="230" height="210"><line x1="19.6" y1="20.8" x2="209" y2="196.4" stroke="#000" stroke-width="2.2"/></svg>
<div id="callout"><span>Filtr pracovníků</span></div>
</body>
</html>
